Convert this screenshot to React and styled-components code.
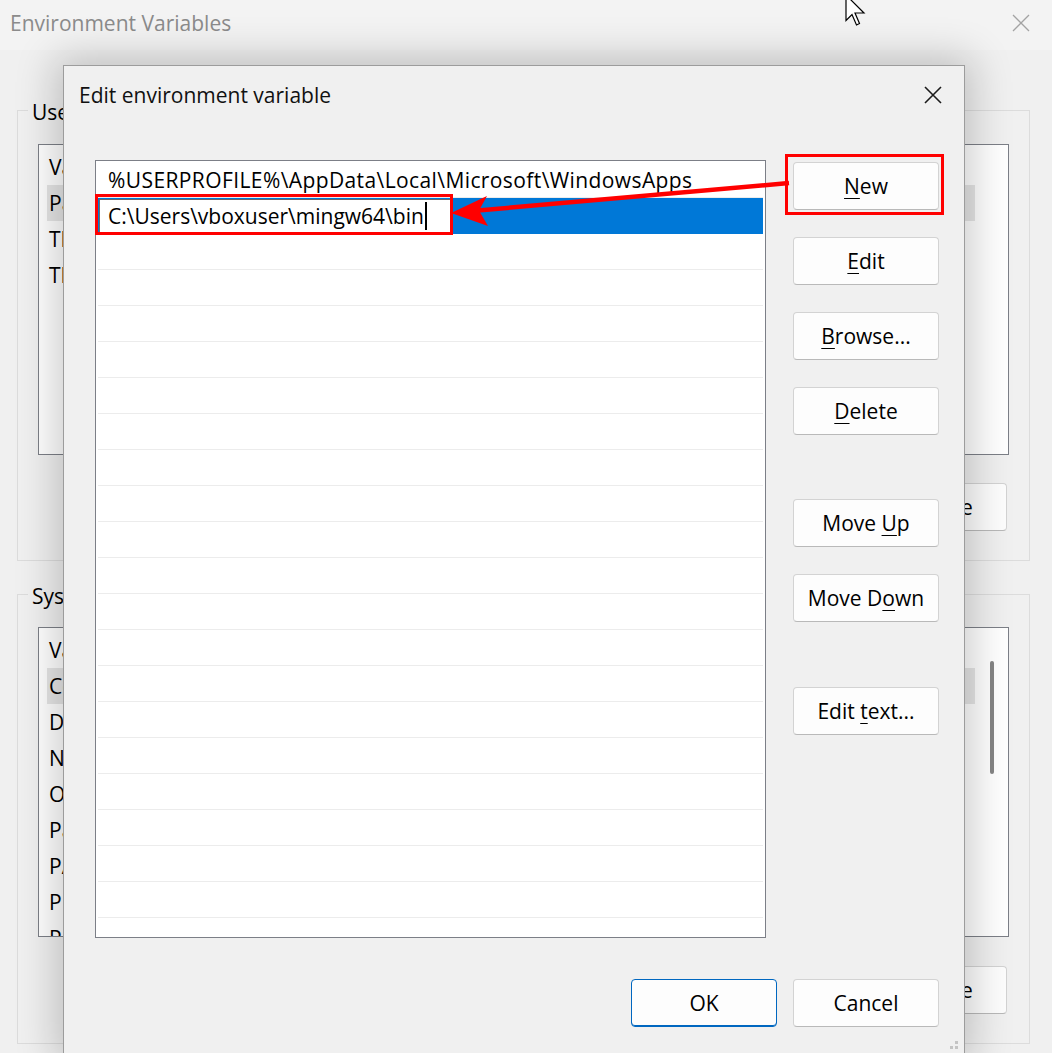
import React from "react";
import styled, { createGlobalStyle } from "styled-components";

const GlobalStyle = createGlobalStyle`
  * {
    box-sizing: border-box;
  }
  html,
  body {
    margin: 0;
    padding: 0;
    background: #f0f0f0;
  }
`;

const Screen = styled.div`
  position: relative;
  width: 1052px;
  height: 1053px;
  overflow: hidden;
  background: #f0f0f0;
  font-family: "Open Sans", "Noto Sans", sans-serif;
  font-size: 21px;
  color: #000;
`;

/* ---------- background window ---------- */

const BackWindow = styled.div`
  display: flex;
  flex-direction: column;
  height: 100%;
`;

const TitleBar = styled.div`
  height: 50px;
  display: flex;
  align-items: center;
  justify-content: space-between;
  padding: 0 22px 5px 10px;
  background: #f3f3f3;
  color: #8b8b8b;
`;

const BackBody = styled.div`
  padding: 0 22px 0 17px;
`;

const GroupBox = styled.div`
  margin-top: ${(p) => p.$top}px;
  border: 1px solid #dcdcdc;
  padding: 0 20px 29px 20px;
`;

const Legend = styled.div`
  width: fit-content;
  margin: -12px 0 0 -10px;
  padding: 0 4px;
  line-height: 26px;
  background: #f0f0f0;
`;

const ListView = styled.div`
  margin-top: ${(p) => p.$top}px;
  height: ${(p) => p.$height}px;
  display: flex;
  border: 1px solid #7c7f87;
  background: #fff;
  overflow: hidden;
`;

const ListRows = styled.div`
  flex: 1;
  padding: 4px ${(p) => p.$right}px 0 8px;
`;

const ListRow = styled.div`
  height: 36px;
  display: flex;
  align-items: center;
  padding-left: 2px;
  background: ${(p) => (p.$selected ? "#e6e6e6" : "transparent")};
  white-space: nowrap;
`;

const NameCell = styled.span`
  width: 290px;
`;

const ScrollTrack = styled.div`
  width: 28px;
  margin-right: 3px;
  padding: 33px 0 0 13px;
`;

const ScrollThumb = styled.div`
  width: 4px;
  height: 113px;
  border-radius: 2px;
  background: #858585;
`;

const BackButtons = styled.div`
  margin-top: ${(p) => p.$top}px;
  display: flex;
  justify-content: flex-end;
  gap: 16px;
  padding-right: 2px;
`;

/* ---------- shared button ---------- */

const Button = styled.button`
  width: ${(p) => p.$w || 146}px;
  height: 48px;
  margin-top: ${(p) => p.$push || 0}px;
  padding: 0;
  border: 1px solid ${(p) => (p.$primary ? "#0067c0" : "#d3d3d3")};
  border-bottom-color: ${(p) => (p.$primary ? "#0067c0" : "#b9b9b9")};
  box-shadow: ${(p) => (p.$primary ? "inset 0 -1px 0 #0067c0" : "none")};
  border-radius: 4px;
  background: #fdfdfd;
  font-family: inherit;
  font-size: 21px;
  color: #000;
  flex-shrink: 0;
`;

const Acc = styled.span`
  text-decoration: underline;
  text-decoration-thickness: 1px;
  text-underline-offset: 4px;
`;

const Label = ({ text, acc }) =>
  acc === undefined ? (
    text
  ) : (
    <>
      {text.slice(0, acc)}
      <Acc>{text[acc]}</Acc>
      {text.slice(acc + 1)}
    </>
  );

/* ---------- dialog ---------- */

const Dialog = styled.div`
  position: absolute;
  left: 63px;
  top: 65px;
  width: 902px;
  height: 992px;
  display: flex;
  flex-direction: column;
  background: #f0f0f0;
  border: 1px solid #9c9c9c;
  box-shadow: 0 0 38px 8px rgba(0, 0, 0, 0.2);
`;

const DialogHeader = styled.div`
  height: 58px;
  display: flex;
  align-items: center;
  justify-content: space-between;
  padding: 0 22px 0 15px;
  color: #111;
`;

const DialogContent = styled.div`
  margin-top: 36px;
  display: flex;
  gap: 27px;
  padding-left: 31px;
`;

const PathList = styled.div`
  width: 671px;
  height: 778px;
  padding: 1px 2px;
  border: 1px solid #7c7f87;
  background: #fff;
  overflow: hidden;
`;

const PathRow = styled.div`
  height: 36px;
  display: flex;
  align-items: center;
  padding-left: ${(p) => (p.$selected ? 1 : 10)}px;
  border-bottom: 1px solid ${(p) => (p.$selected ? "#0078d7" : "#ececec")};
  background: ${(p) => (p.$selected ? "#0078d7" : "#fff")};
  white-space: nowrap;
  letter-spacing: ${(p) => p.$spacing || 0}px;
`;

const EditBox = styled.div`
  width: 352px;
  height: 34px;
  display: flex;
  align-items: center;
  padding-left: 8px;
  border: 1px solid #6a6a6a;
  background: #fff;
  white-space: nowrap;
`;

const Caret = styled.span`
  width: 2px;
  height: 28px;
  margin-left: 1px;
  background: #000;
`;

const ButtonColumn = styled.div`
  display: flex;
  flex-direction: column;
  gap: 27px;
  padding-top: 2px;
`;

const DialogFooter = styled.div`
  margin-top: 41px;
  display: flex;
  justify-content: flex-end;
  gap: 16px;
  padding-right: 25px;
`;

const Grip = styled.svg`
  position: absolute;
  right: 4px;
  bottom: 4px;
`;

const Overlay = styled.svg`
  position: absolute;
  left: 0;
  top: 0;
  pointer-events: none;
`;

const CloseIcon = ({ color, width }) => (
  <svg width="18" height="18" viewBox="0 0 18 18">
    <path
      d="M1 1 L17 17 M17 1 L1 17"
      stroke={color}
      strokeWidth={width}
      fill="none"
    />
  </svg>
);

const userVars = [
  { name: "Variable", value: "Value" },
  { name: "Path", value: "C:\\Users\\vboxuser\\AppData\\Local\\Microsoft\\WindowsApps;", selected: true },
  { name: "TEMP", value: "C:\\Users\\vboxuser\\AppData\\Local\\Temp" },
  { name: "TMP", value: "C:\\Users\\vboxuser\\AppData\\Local\\Temp" },
];

const systemVars = [
  { name: "Variable", value: "Value" },
  { name: "ComSpec", value: "C:\\Windows\\system32\\cmd.exe", selected: true },
  { name: "DriverData", value: "C:\\Windows\\System32\\Drivers\\DriverData" },
  { name: "NUMBER_OF_PROCESSORS", value: "2" },
  { name: "OS", value: "Windows_NT" },
  { name: "Path", value: "C:\\Windows\\system32;C:\\Windows;" },
  { name: "PATHEXT", value: ".COM;.EXE;.BAT;.CMD;.VBS;.VBE;.JS" },
  { name: "PROCESSOR_ARCHITECTURE", value: "AMD64" },
  { name: "PROCESSOR_IDENTIFIER", value: "Intel64 Family 6" },
];

const dialogButtons = [
  { text: "New", acc: 0 },
  { text: "Edit", acc: 0 },
  { text: "Browse...", acc: 0 },
  { text: "Delete", acc: 0 },
  { text: "Move Up", acc: 5, push: 37 },
  { text: "Move Down", acc: 6 },
  { text: "Edit text...", acc: 5, push: 38 },
];

const paths = [
  "%USERPROFILE%\\AppData\\Local\\Microsoft\\WindowsApps",
  "C:\\Users\\vboxuser\\mingw64\\bin",
];

const VarList = ({ vars, top, height, scroll }) => (
  <ListView $top={top} $height={height}>
    <ListRows $right={scroll ? 2 : 33}>
      {vars.map((v) => (
        <ListRow key={v.name} $selected={v.selected}>
          <NameCell>{v.name}</NameCell>
          {v.value}
        </ListRow>
      ))}
    </ListRows>
    {scroll && (
      <ScrollTrack>
        <ScrollThumb />
      </ScrollTrack>
    )}
  </ListView>
);

const BackButtonRow = ({ top }) => (
  <BackButtons $top={top}>
    <Button $w={132}>New...</Button>
    <Button $w={132}>Edit...</Button>
    <Button $w={132}>Delete</Button>
  </BackButtons>
);

const App = () => (
  <Screen>
    <GlobalStyle />
    <BackWindow>
      <TitleBar>
        <span>Environment Variables</span>
        <CloseIcon color="#a3a3a3" width={1.3} />
      </TitleBar>
      <BackBody>
        <GroupBox $top={60}>
          <Legend>User variables for vboxuser</Legend>
          <VarList vars={userVars} top={19} height={311} />
          <BackButtonRow top={28} />
        </GroupBox>
        <GroupBox $top={33}>
          <Legend>System variables</Legend>
          <VarList vars={systemVars} top={18} height={310} scroll />
          <BackButtonRow top={29} />
        </GroupBox>
      </BackBody>
    </BackWindow>

    <Dialog>
      <DialogHeader>
        <span>Edit environment variable</span>
        <CloseIcon color="#1b1b1b" width={1.6} />
      </DialogHeader>
      <DialogContent>
        <PathList>
          <PathRow $spacing={0.4}>{paths[0]}</PathRow>
          <PathRow $selected>
            <EditBox>
              {paths[1]}
              <Caret />
            </EditBox>
          </PathRow>
          {Array.from({ length: 20 }, (_, i) => (
            <PathRow key={i} />
          ))}
        </PathList>
        <ButtonColumn>
          {dialogButtons.map((b) => (
            <Button key={b.text} $push={b.push}>
              <Label text={b.text} acc={b.acc} />
            </Button>
          ))}
        </ButtonColumn>
      </DialogContent>
      <DialogFooter>
        <Button $primary>OK</Button>
        <Button>Cancel</Button>
      </DialogFooter>
      <Grip width="12" height="12" viewBox="0 0 12 12">
        <rect x="7" y="1" width="3" height="3" fill="#c4c4c4" />
        <rect x="2" y="6" width="3" height="3" fill="#c4c4c4" />
        <rect x="7" y="6" width="3" height="3" fill="#c4c4c4" />
      </Grip>
    </Dialog>

    <Overlay width="1052" height="1053" viewBox="0 0 1052 1053">
      <rect x="96.5" y="195.5" width="355" height="38" fill="none" stroke="#f00" strokeWidth="3" />
      <rect x="786.5" y="155.5" width="156" height="58" fill="none" stroke="#f00" strokeWidth="3" />
      <line x1="789" y1="183" x2="478" y2="210.5" stroke="#f00" strokeWidth="4.5" />
      <polygon points="451,213 487,196 479,210.5 488,226" fill="#f00" />
      <path
        d="M846 -5 L846 20.5 L852 14.5 L856.5 25 L859.5 23.5 L855 13 L864 13 Z"
        fill="#fff"
        stroke="#000"
        strokeWidth="1.2"
        strokeLinejoin="miter"
      />
    </Overlay>
  </Screen>
);

export default App;
